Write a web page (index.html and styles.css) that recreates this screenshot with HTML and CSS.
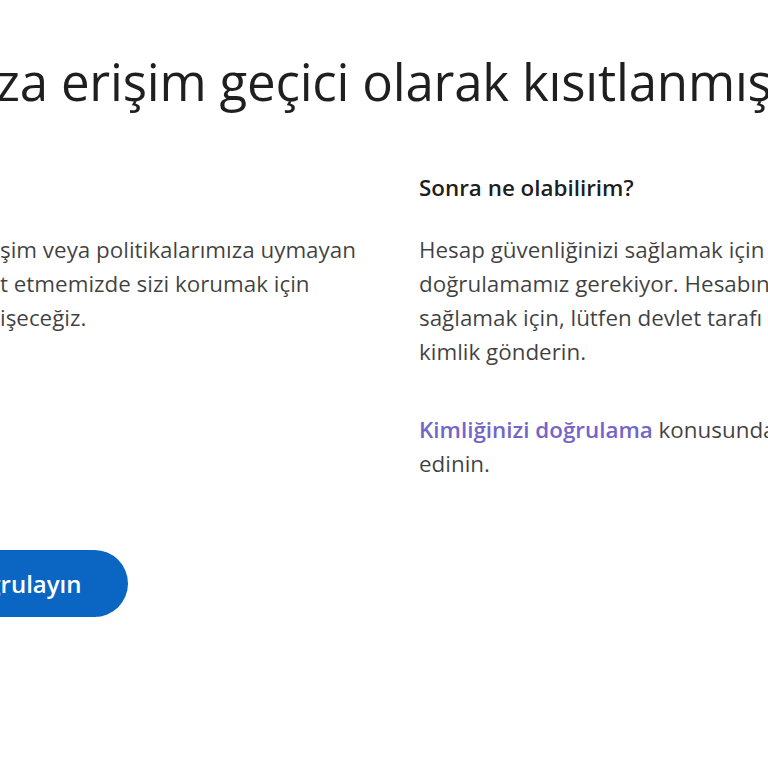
FILE: index.html
```html
<!DOCTYPE html>
<html lang="tr">
<head>
<meta charset="utf-8">
<link rel="stylesheet" href="styles.css">
</head>
<body>
<main class="page">
  <h1 class="title">za erişim geçici olarak kısıtlanmıştır</h1>
  <div class="columns">
    <section class="col col-left">
      <h2 class="col-heading">&nbsp;</h2>
      <p class="text">
        <span class="line">şim veya politikalarımıza uymayan</span>
        <span class="line">t etmemizde sizi korumak için</span>
        <span class="line">işeceğiz.</span>
      </p>
    </section>
    <section class="col col-right">
      <h2 class="col-heading">Sonra ne olabilirim?</h2>
      <p class="text">
        <span class="line">Hesap güvenliğinizi sağlamak için</span>
        <span class="line">doğrulamamız gerekiyor. Hesabın</span>
        <span class="line">sağlamak için, lütfen devlet tarafı</span>
        <span class="line">kimlik gönderin.</span>
      </p>
      <p class="text text-link">
        <span class="line"><a class="link" href="#">Kimliğinizi doğrulama</a> konusunda</span>
        <span class="line">edinin.</span>
      </p>
    </section>
  </div>
  <div class="actions">
    <a class="btn" href="#">Kimliğinizi doğrulayın</a>
  </div>
</main>
</body>
</html>
```
FILE: styles.css
```css
html, body {
  margin: 0;
  padding: 0;
  background: #ffffff;
  overflow: hidden;
  width: 768px;
  height: 768px;
}
body {
  font-family: "Segoe UI", "Open Sans", "Noto Sans", sans-serif;
  color: rgba(0, 0, 0, 0.9);
}
.page {
  padding-top: 46px;
}
.title {
  margin: 0 0 0 -4px;
  font-size: 51px;
  line-height: 70px;
  font-weight: 400;
  letter-spacing: -0.2px;
  white-space: nowrap;
  color: rgba(0, 0, 0, 0.88);
}
.columns {
  display: grid;
  grid-template-columns: 360px 1fr;
  column-gap: 59px;
  margin-top: 55px;
}
.col-heading {
  margin: 0;
  font-size: 22.4px;
  line-height: 34px;
  font-weight: 600;
  color: rgba(0, 0, 0, 0.9);
}
.text {
  margin: 28px 0 0;
  font-size: 22.4px;
  line-height: 34px;
  color: rgba(0, 0, 0, 0.75);
}
.line {
  display: block;
  white-space: nowrap;
}
.text-link {
  margin-top: 44px;
}
.link {
  color: #7466c8;
  font-weight: 600;
  text-decoration: none;
}
.actions {
  margin-top: 69px;
}
.btn {
  display: inline-flex;
  align-items: center;
  height: 67px;
  padding: 0 46px 0 32px;
  margin-left: -199px;
  border-radius: 34px;
  background: #0a66c2;
  color: #ffffff;
  font-size: 24px;
  font-weight: 600;
  text-decoration: none;
  white-space: nowrap;
}
```
